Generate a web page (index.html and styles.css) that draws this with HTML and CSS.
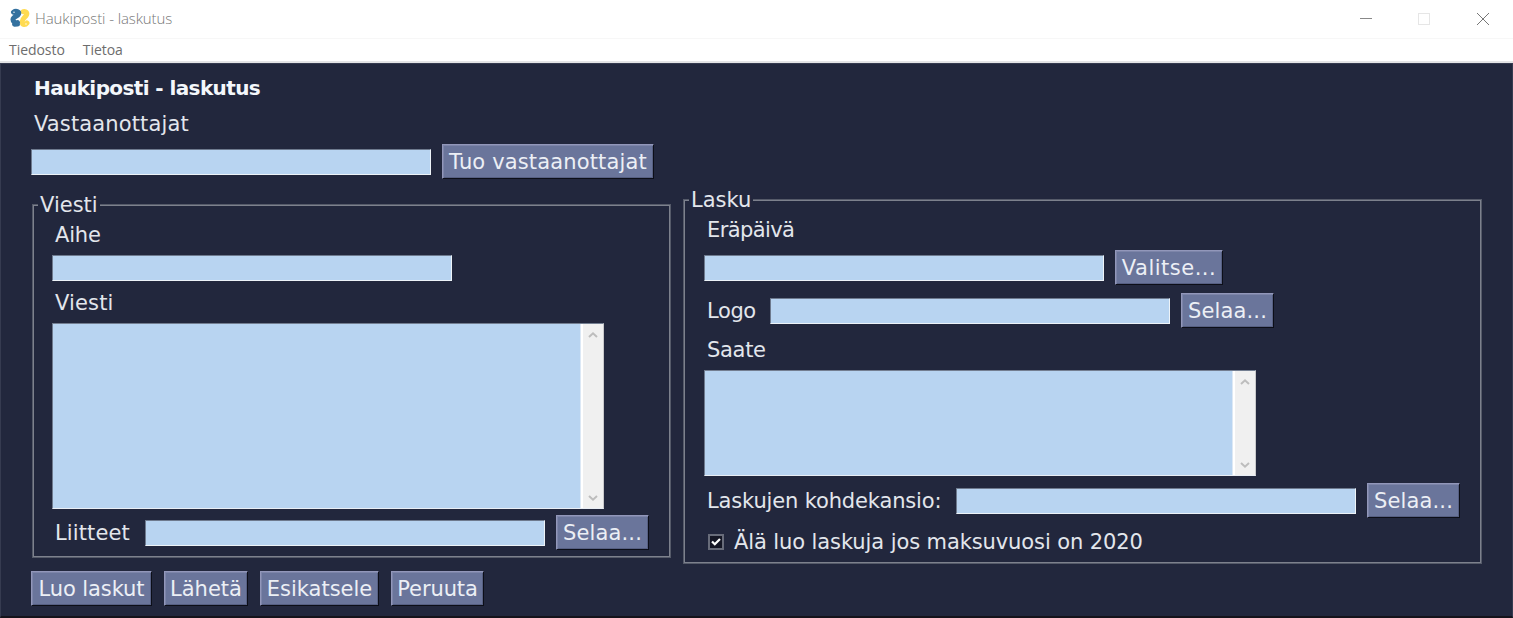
FILE: index.html
```html
<!DOCTYPE html>
<html lang="fi">
<head>
<meta charset="utf-8">
<title>Haukiposti - laskutus</title>
<link rel="stylesheet" href="styles.css">
</head>
<body>
<div class="window">
  <header class="titlebar">
    <svg class="logo" viewBox="0 0 20 20" width="20" height="20">
      <g fill="none" stroke-width="5" stroke-linecap="round" stroke-linejoin="round">
        <path d="M13.200 3.700C16 3 17.500 4.800 16.500 7 15.500 9.200 12.500 10.500 12.200 13.500 12 17.500 15.500 17 17 15" stroke="#ffdb52"/>
        <path d="M3.500 4.200C6 2.300 9.500 3.500 8.500 6.200 7.500 9 3.200 8.200 3 11.500 3 13 4.500 15.500 7.500 14.500M4.500 16.200L7.500 16" stroke="#34719f"/>
      </g>
      <circle cx="4" cy="4.200" r=".7" fill="#fff"/><circle cx="16" cy="16" r=".7" fill="#fff"/>
    </svg>
    <span class="caption">Haukiposti - laskutus</span>
    <svg class="controls" viewBox="0 0 132 20" width="132" height="20" fill="none">
      <path d="M0 9.500H12" stroke="#888"/>
      <rect x="58.500" y="4.500" width="11" height="11" stroke="#e6e6e6"/>
      <path d="M117 4L129 16M129 4L117 16" stroke="#777"/>
    </svg>
  </header>
  <nav class="menubar"><span>Tiedosto</span><span>Tietoa</span></nav>
  <main class="content">
    <h1 class="heading">Haukiposti - laskutus</h1>
    <div class="label recipients-label">Vastaanottajat</div>
    <div class="row recipients-row"><div class="input"></div><button class="btn w-import">Tuo vastaanottajat</button></div>
    <div class="frames">
      <section class="frame message">
        <span class="legend">Viesti</span>
        <div class="label subject-label">Aihe</div>
        <div class="row subject-row"><div class="input"></div></div>
        <div class="label body-label">Viesti</div>
        <div class="textarea tall"><div class="paper"></div>
          <div class="scroll"><svg width="12" height="8" viewBox="0 0 12 8"><path d="M2 6L6 2.300 10 6"/></svg><svg width="12" height="8" viewBox="0 0 12 8"><path d="M2 2L6 5.700 10 2"/></svg></div></div>
        <div class="row attach-row"><span class="side w-attach">Liitteet</span><div class="input"></div><button class="btn w-browse">Selaa...</button></div>
      </section>
      <section class="frame invoice">
        <span class="legend">Lasku</span>
        <div class="label due-label">Eräpäivä</div>
        <div class="row due-row"><div class="input"></div><button class="btn w-pick">Valitse...</button></div>
        <div class="row logo-row"><span class="side w-logo">Logo</span><div class="input"></div><button class="btn w-browse">Selaa...</button></div>
        <div class="label note-label">Saate</div>
        <div class="textarea short"><div class="paper"></div>
          <div class="scroll"><svg width="12" height="8" viewBox="0 0 12 8"><path d="M2 6L6 2.300 10 6"/></svg><svg width="12" height="8" viewBox="0 0 12 8"><path d="M2 2L6 5.700 10 2"/></svg></div></div>
        <div class="row folder-row"><span class="side w-folder">Laskujen kohdekansio:</span><div class="input"></div><button class="btn w-browse">Selaa...</button></div>
        <div class="check-row"><span class="checkbox"><svg width="12" height="12" viewBox="0 0 12 12"><path d="M2 5.500L4.800 8.300 10 3" fill="none" stroke="#fff" stroke-width="2.200"/></svg></span><span class="check-text">Älä luo laskuja jos maksuvuosi on 2020</span></div>
      </section>
    </div>
    <div class="actions"><button class="btn w-create">Luo laskut</button><button class="btn w-send">Lähetä</button><button class="btn w-preview">Esikatsele</button><button class="btn w-cancel">Peruuta</button></div>
  </main>
</div>
</body>
</html>
```
FILE: styles.css
```css
* { box-sizing: border-box; }
body { margin: 0; background: #fff; }
.window { width: 1513px; height: 618px; overflow: hidden; display: flex; flex-direction: column; }
.titlebar { height: 38px; flex: none; display: flex; align-items: center; padding: 0 21px 0 10px; }
.logo { margin-right: 5px; margin-top: -2px; }
.caption { font: 300 15px "Open Sans", sans-serif; letter-spacing: -.1px; color: #777; flex: 1; white-space: nowrap; padding-bottom: 2px; }
.controls { margin-top: -1px; }
.menubar { height: 25px; flex: none; border-top: 1px solid #f7f7f7; border-bottom: 2px solid #e4e4e6; display: flex; gap: 18px; padding-left: 9px; font: 14px/22px "Open Sans", sans-serif; letter-spacing: -.05px; color: #6d6d6d; }
.content { flex: 1; background: #22273d; border: 1px solid #363b50; border-bottom: 2px solid #15131b; padding: 7px 0 0 30px; font: 21px/34px "DejaVu Sans", Verdana, sans-serif; color: #e3e6ec; white-space: nowrap; }
.heading { margin: 0; padding-left: 3px; height: 34px; font-size: 20px; line-height: 34px; letter-spacing: -.6px; color: #f4f7fb; }
.label { height: 34px; padding-left: 3px; }
.recipients-label { padding-top: 2px; letter-spacing: .13px; }
.recipients-row { margin-top: 5px; }
.row { display: flex; align-items: center; height: 36px; }
.input { width: 400px; height: 26px; flex: none; background: #b8d4f1; border: 1px solid; border-color: #6e7a8e #edf3f8 #edf3f8 #6e7a8e; }
.btn { height: 35px; margin: 0 0 1px 11px; padding: 1px 0 0; flex: none; border: 1px solid; border-color: #9297ba #0c0e18 #0c0e18 #9297ba; box-shadow: inset 1px 1px #7d85a9, inset -1px -1px #565f82; background: #6a759b; color: #eceff5; font: inherit; line-height: 32px; text-align: center; }
.row .btn { padding-top: 2px; line-height: 31px; }
.frames { display: flex; align-items: flex-start; }
.frame { position: relative; border: 1px solid #555a69; box-shadow: inset 0 0 0 1px #7d818d; background: #22273d; }
.legend { position: absolute; top: -15px; left: 5px; padding: 0 2px; line-height: 30px; height: 30px; background: #22273d; }
.message { width: 639px; height: 354px; margin: 24px 0 0 1px; padding: 13px 0 0 19px; }
.invoice { width: 799px; height: 365px; margin: 19px 0 0 12px; padding: 13px 0 0 20px; }
.subject-label { letter-spacing: -.2px; }
.subject-row { margin-top: -2px; }
.body-label { padding-top: 1px; margin-top: -1px; letter-spacing: .15px; }
.textarea { width: 552px; display: flex; margin-top: 4px; border: 1px solid; border-color: #737e91 #c9c9cb #e9eef5 #6e7a8e; }
.tall { height: 186px; }
.short { height: 106px; }
.paper { flex: 1; background: #b8d4f1; border-right: 1px solid #dce8f5; }
.scroll { width: 22px; background: #f0f0f0; border-left: 2px solid #fff; display: flex; flex-direction: column; align-items: center; justify-content: space-between; padding: 7px 0 6px; }
.scroll path { fill: none; stroke: #bdbdbd; stroke-width: 2; }
.side { padding-left: 3px; flex: none; }
.w-attach { width: 93px; letter-spacing: .12px; }
.w-logo { width: 66px; letter-spacing: -.4px; }
.w-folder { width: 252px; letter-spacing: -.15px; }
.w-import { width: 212px; letter-spacing: .15px; }
.w-browse { width: 93px; letter-spacing: .15px; }
.w-pick { width: 108px; letter-spacing: .5px; }
.attach-row { margin-top: 6px; }
.due-label { letter-spacing: -.6px; }
.due-row { margin-top: 3px; }
.logo-row { margin-top: 7px; }
.note-label { padding-top: 1px; margin-top: 3px; letter-spacing: -.3px; }
.note-label + .textarea { margin-top: 4px; }
.folder-row { margin-top: 7px; }
.check-row { display: flex; align-items: center; height: 34px; margin-top: 6px; padding-left: 4px; gap: 10px; }
.check-text { letter-spacing: -.1px; }
.checkbox { width: 16px; height: 16px; flex: none; display: grid; place-items: center; background: #151725; border: 2px solid #686c7a; }
.actions { display: flex; gap: 12px; margin-top: 7px; }
.actions .btn { margin: 0; }
.w-create { width: 121px; letter-spacing: -.1px; }
.w-send { width: 84px; }
.w-preview { width: 119px; }
.w-cancel { width: 93px; letter-spacing: -.1px; }
```
